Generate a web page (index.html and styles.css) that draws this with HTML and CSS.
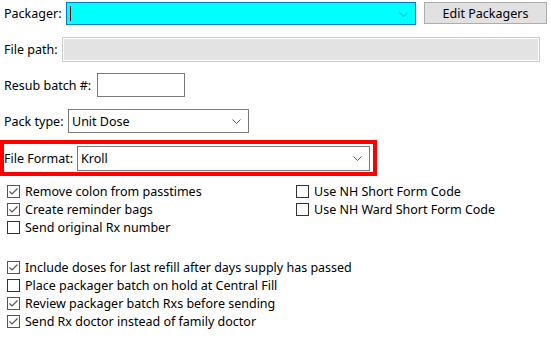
FILE: index.html
```html
<!DOCTYPE html>
<html>
<head>
<meta charset="utf-8">
<link rel="stylesheet" href="styles.css">
</head>
<body>
<div class="form">
  <div class="row row-packager">
    <span class="lbl">Packager:</span>
    <div class="combo combo-focus w-packager">
      <span class="caret"></span>
      <svg class="chev" width="9" height="5" viewBox="0 0 9 5"><path d="M0.5 0.5 L4.5 4.5 L8.5 0.5" fill="none" stroke="#606060" stroke-width="1"/></svg>
    </div>
    <button class="btn">Edit Packagers</button>
  </div>
  <div class="row row-path">
    <span class="lbl">File path:</span>
    <div class="textbox disabled w-path"></div>
  </div>
  <div class="row row-resub">
    <span class="lbl">Resub batch #:</span>
    <div class="textbox w-resub"></div>
  </div>
  <div class="row row-pack">
    <span class="lbl">Pack type:</span>
    <div class="combo w-pack">
      <span class="val">Unit Dose</span>
      <svg class="chev" width="9" height="5" viewBox="0 0 9 5"><path d="M0.5 0.5 L4.5 4.5 L8.5 0.5" fill="none" stroke="#606060" stroke-width="1"/></svg>
    </div>
  </div>
  <div class="highlight">
    <span class="lbl lbl-ff">File Format:</span>
    <div class="combo w-format">
      <span class="val">Kroll</span>
      <svg class="chev" width="9" height="5" viewBox="0 0 9 5"><path d="M0.5 0.5 L4.5 4.5 L8.5 0.5" fill="none" stroke="#606060" stroke-width="1"/></svg>
    </div>
  </div>
  <div class="checks group1">
    <div class="col col-left">
      <div class="cb on"><span class="box"><svg width="11" height="11" viewBox="0 0 11 11"><path d="M1.5 5.5 L4 8 L9.5 2.5" fill="none" stroke="#555" stroke-width="1.2"/></svg></span><span>Remove colon from passtimes</span></div>
      <div class="cb on"><span class="box"><svg width="11" height="11" viewBox="0 0 11 11"><path d="M1.5 5.5 L4 8 L9.5 2.5" fill="none" stroke="#555" stroke-width="1.2"/></svg></span><span>Create reminder bags</span></div>
      <div class="cb"><span class="box"></span><span>Send original Rx number</span></div>
    </div>
    <div class="col col-right">
      <div class="cb"><span class="box"></span><span>Use NH Short Form Code</span></div>
      <div class="cb"><span class="box"></span><span>Use NH Ward Short Form Code</span></div>
    </div>
  </div>
  <div class="checks group2">
    <div class="col col-left">
      <div class="cb on"><span class="box"><svg width="11" height="11" viewBox="0 0 11 11"><path d="M1.5 5.5 L4 8 L9.5 2.5" fill="none" stroke="#555" stroke-width="1.2"/></svg></span><span>Include doses for last refill after days supply has passed</span></div>
      <div class="cb"><span class="box"></span><span>Place packager batch on hold at Central Fill</span></div>
      <div class="cb on"><span class="box"><svg width="11" height="11" viewBox="0 0 11 11"><path d="M1.5 5.5 L4 8 L9.5 2.5" fill="none" stroke="#555" stroke-width="1.2"/></svg></span><span>Review packager batch Rxs before sending</span></div>
      <div class="cb on"><span class="box"><svg width="11" height="11" viewBox="0 0 11 11"><path d="M1.5 5.5 L4 8 L9.5 2.5" fill="none" stroke="#555" stroke-width="1.2"/></svg></span><span>Send Rx doctor instead of family doctor</span></div>
    </div>
  </div>
</div>
</body>
</html>
```
FILE: styles.css
```css
html, body {
  margin: 0;
  padding: 0;
  background: #ffffff;
}
body {
  font-family: "Noto Sans", "Open Sans", sans-serif;
  font-size: 12.5px;
  color: #000;
  width: 551px;
  height: 344px;
  overflow: hidden;
}
.form {
  display: flex;
  flex-direction: column;
}
.row {
  display: flex;
  align-items: center;
  padding-left: 4px;
}
.lbl {
  white-space: nowrap;
}
.row-packager { margin-top: 2px; height: 23px; align-items: flex-start; }
.row-packager .lbl { line-height: 23px; width: 62px; }
.row-path { margin-top: 12px; height: 25px; }
.row-path .lbl { width: 58px; }
.row-resub { margin-top: 11px; height: 24px; }
.row-resub .lbl { width: 93px; }
.row-pack { margin-top: 12px; height: 24px; }
.row-pack .lbl { width: 64px; }

.combo {
  box-sizing: border-box;
  border: 1px solid #7a7a7a;
  background: #fff;
  display: flex;
  align-items: center;
  position: relative;
  height: 100%;
}
.combo .val {
  padding-left: 3px;
}
.combo .chev {
  position: absolute;
  right: 7px;
  top: 50%;
  margin-top: -2px;
}
.combo-focus {
  background: #00ffff;
  border-color: #0078d7;
}
.caret {
  display: block;
  width: 1px;
  height: 15px;
  margin-left: 3px;
  background: #5a0000;
}
.w-packager { width: 350px; height: 23px; }
.w-pack { width: 181px; }
.w-format { width: 293px; height: 25px; }

.btn {
  box-sizing: border-box;
  margin-left: 8px;
  width: 123px;
  height: 22px;
  border: 1px solid #adadad;
  background: #e1e1e1;
  font-family: inherit;
  font-size: 12.5px;
  color: #000;
  padding: 0;
}

.textbox {
  box-sizing: border-box;
  height: 100%;
  border: 1px solid #7a7a7a;
  background: #fff;
}
.textbox.disabled {
  border-color: #cccccc;
  background: #e3e3e3;
  box-shadow: inset 0 0 0 1px #ffffff;
}
.w-path { width: 478px; }
.w-resub { width: 88px; }

.highlight {
  box-sizing: border-box;
  margin-top: 7px;
  width: 377px;
  height: 36px;
  border: 4px solid #ff0000;
  display: flex;
  align-items: center;
}
.lbl-ff { width: 73px; }

.checks {
  display: flex;
  padding-left: 7px;
}
.group1 { margin-top: 6px; }
.group2 { margin-top: 22px; }
.col { display: flex; flex-direction: column; }
.col-left { width: 289px; }
.cb {
  display: flex;
  align-items: center;
  height: 18px;
  white-space: nowrap;
}
.box {
  box-sizing: border-box;
  width: 13px;
  height: 13px;
  border: 1px solid #333333;
  background: #fff;
  margin-right: 5px;
  flex: none;
  display: flex;
  align-items: center;
  justify-content: center;
}
.cb.on .box { border-color: #555; }
.box svg { display: block; }
```
